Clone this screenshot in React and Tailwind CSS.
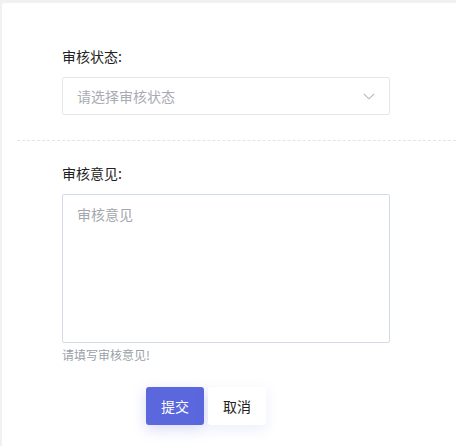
import React from "react";

const font = { fontFamily: '"Noto Sans CJK SC", "Noto Sans", sans-serif' };

function Chevron() {
  return (
    <svg width="12" height="7" viewBox="0 0 12 7" fill="none" className="text-[#b4b6be]">
      <path d="M0.8 0.8 L6 5.8 L11.2 0.8" stroke="currentColor" strokeWidth="1.1" />
    </svg>
  );
}

export default function App() {
  return (
    <div className="min-h-[446px] bg-[#f1f1f3] pl-[2px] pt-[3px]" style={font}>
      <div className="h-[443px] bg-white rounded-tl-[2px]">
        <div className="pl-[60px] pt-[43px] pb-[25px]">
          <div className="text-[14px] leading-[20px] text-[#222]">审核状态:</div>
          <div className="mt-[11px] w-[328px] h-[38px] border border-[#e6e7ee] rounded-[2px] flex items-center justify-between pl-[14px] pr-[14px]">
            <span className="text-[14px] text-[#a9abb3]">请选择审核状态</span>
            <Chevron />
          </div>
        </div>
        <div className="ml-[15px] border-t border-dashed border-[#e3e4e8]" />
        <div className="pl-[60px] pt-[22px]">
          <div className="text-[14px] leading-[20px] text-[#222]">审核意见:</div>
          <div className="mt-[11px] w-[328px] h-[149px] border border-[#d3dbe6] rounded-[2px] px-[14px] py-[6px]">
            <span className="text-[14px] leading-[20px] text-[#a3a7ae]">审核意见</span>
          </div>
          <div className="mt-[3px] text-[12px] leading-[18px] text-[#9a9fa8]">请填写审核意见!</div>
        </div>
        <div className="flex gap-[4px] pl-[144px] mt-[23px]">
          <button className="w-[58px] h-[38px] rounded-[3px] bg-[#5a67dd] text-white text-[14px] shadow-[0_4px_14px_rgba(90,103,221,0.25)]">
            提交
          </button>
          <button className="w-[58px] h-[38px] rounded-[3px] bg-white text-[#222] text-[14px] shadow-[0_4px_14px_rgba(90,103,221,0.12)]">
            取消
          </button>
        </div>
      </div>
    </div>
  );
}
